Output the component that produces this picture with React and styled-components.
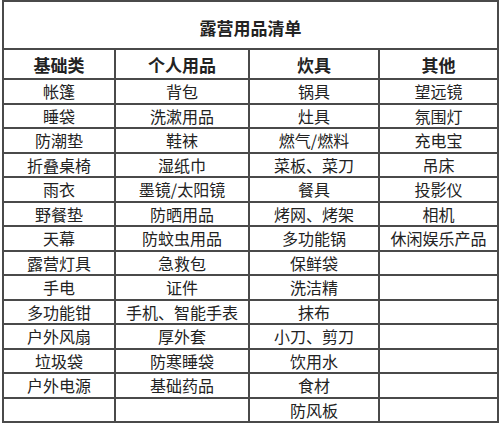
import React from 'react';
import styled, { createGlobalStyle } from 'styled-components';

const GlobalStyle = createGlobalStyle`
  html, body {
    margin: 0;
    padding: 0;
    background: #fff;
  }
  body {
    font-family: "Noto Sans CJK SC", "Noto Sans", sans-serif;
  }
`;

const columns = ['基础类', '个人用品', '炊具', '其他'];

const rows = [
  ['帐篷', '背包', '锅具', '望远镜'],
  ['睡袋', '洗漱用品', '灶具', '氛围灯'],
  ['防潮垫', '鞋袜', '燃气/燃料', '充电宝'],
  ['折叠桌椅', '湿纸巾', '菜板、菜刀', '吊床'],
  ['雨衣', '墨镜/太阳镜', '餐具', '投影仪'],
  ['野餐垫', '防晒用品', '烤网、烤架', '相机'],
  ['天幕', '防蚊虫用品', '多功能锅', '休闲娱乐产品'],
  ['露营灯具', '急救包', '保鲜袋', ''],
  ['手电', '证件', '洗洁精', ''],
  ['多功能钳', '手机、智能手表', '抹布', ''],
  ['户外风扇', '厚外套', '小刀、剪刀', ''],
  ['垃圾袋', '防寒睡袋', '饮用水', ''],
  ['户外电源', '基础药品', '食材', ''],
  ['', '', '防风板', ''],
];

const StyledTable = styled.div`
  display: grid;
  grid-template-columns: 112px 134px 130px 119px;
  grid-template-rows: 48px 30px repeat(14, 1fr);
  height: 423px;
  margin-left: 2px;
  width: max-content;
  border-top: 2px solid #4a4a4a;
  border-left: 2px solid #4a4a4a;
  box-sizing: border-box;
`;

const StyledCell = styled.div`
  display: flex;
  align-items: center;
  justify-content: center;
  border-right: 2px solid #4a4a4a;
  border-bottom: 2px solid #4a4a4a;
  font-size: ${({ $head }) => ($head ? '17px' : '16px')};
  font-weight: ${({ $head }) => ($head ? 700 : 400)};
  color: #222;
  line-height: 1;
  white-space: nowrap;
`;

const StyledTitle = styled(StyledCell)`
  grid-column: 1 / -1;
  padding-top: 4px;
`;

const App = () => (
  <>
    <GlobalStyle />
    <StyledTable>
      <StyledTitle $head>露营用品清单</StyledTitle>
      {columns.map(name => (
        <StyledCell $head key={name}>
          {name}
        </StyledCell>
      ))}
      {rows.map((row, i) =>
        row.map((item, j) => <StyledCell key={`${i}-${j}`}>{item}</StyledCell>)
      )}
    </StyledTable>
  </>
);

export default App;
